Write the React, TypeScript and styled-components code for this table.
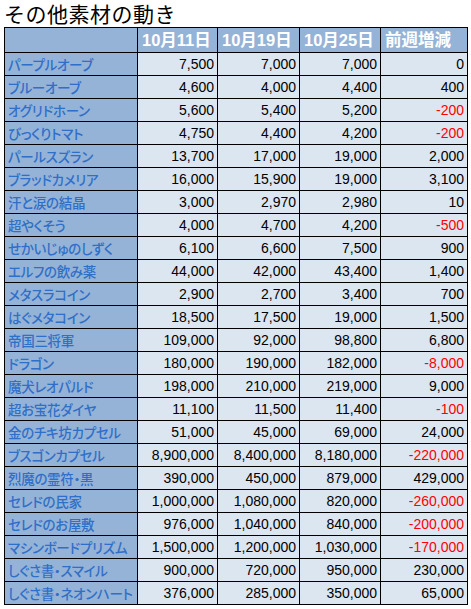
import styled, { createGlobalStyle } from "styled-components";

const GlobalStyle = createGlobalStyle`
  body {
    margin: 0;
    background: #ffffff;
    font-family: "Liberation Sans", "Noto Sans CJK JP", sans-serif;
  }
`;

type Row = {
  name: string;
  values: [string, string, string];
  diff: string;
};

const rows: Row[] = [
  { name: "パープルオーブ", values: ["7,500", "7,000", "7,000"], diff: "0" },
  { name: "ブルーオーブ", values: ["4,600", "4,000", "4,400"], diff: "400" },
  { name: "オグリドホーン", values: ["5,600", "5,400", "5,200"], diff: "-200" },
  { name: "びっくりトマト", values: ["4,750", "4,400", "4,200"], diff: "-200" },
  { name: "パールスズラン", values: ["13,700", "17,000", "19,000"], diff: "2,000" },
  { name: "ブラッドカメリア", values: ["16,000", "15,900", "19,000"], diff: "3,100" },
  { name: "汗と涙の結晶", values: ["3,000", "2,970", "2,980"], diff: "10" },
  { name: "超やくそう", values: ["4,000", "4,700", "4,200"], diff: "-500" },
  { name: "せかいじゅのしずく", values: ["6,100", "6,600", "7,500"], diff: "900" },
  { name: "エルフの飲み薬", values: ["44,000", "42,000", "43,400"], diff: "1,400" },
  { name: "メタスラコイン", values: ["2,900", "2,700", "3,400"], diff: "700" },
  { name: "はぐメタコイン", values: ["18,500", "17,500", "19,000"], diff: "1,500" },
  { name: "帝国三将軍", values: ["109,000", "92,000", "98,800"], diff: "6,800" },
  { name: "ドラゴン", values: ["180,000", "190,000", "182,000"], diff: "-8,000" },
  { name: "魔犬レオパルド", values: ["198,000", "210,000", "219,000"], diff: "9,000" },
  { name: "超お宝花ダイヤ", values: ["11,100", "11,500", "11,400"], diff: "-100" },
  { name: "金のチキ坊カプセル", values: ["51,000", "45,000", "69,000"], diff: "24,000" },
  { name: "ブスゴンカプセル", values: ["8,900,000", "8,400,000", "8,180,000"], diff: "-220,000" },
  { name: "烈魔の霊符・黒", values: ["390,000", "450,000", "879,000"], diff: "429,000" },
  { name: "セレドの民家", values: ["1,000,000", "1,080,000", "820,000"], diff: "-260,000" },
  { name: "セレドのお屋敷", values: ["976,000", "1,040,000", "840,000"], diff: "-200,000" },
  { name: "マシンボードプリズム", values: ["1,500,000", "1,200,000", "1,030,000"], diff: "-170,000" },
  { name: "しぐさ書・スマイル", values: ["900,000", "720,000", "950,000"], diff: "230,000" },
  { name: "しぐさ書・ネオンハート", values: ["376,000", "285,000", "350,000"], diff: "65,000" },
];

const headers = ["10月11日", "10月19日", "10月25日", "前週増減"];
const colWidths = [133, 80, 82, 81, 87];

const Page = styled.div`
  padding: 0 0 0 4px;
`;

const Title = styled.h1`
  margin: 0;
  height: 27px;
  font: 400 21px/27px "Noto Sans CJK JP", sans-serif;
  color: #000000;
  letter-spacing: 0.5px;
`;

const Sheet = styled.table`
  border-collapse: collapse;
  table-layout: fixed;
  width: 463px;
  border: 1px solid #000000;
`;

const HeadCell = styled.th`
  height: 24px;
  padding: 0 0 0 4px;
  background: #95b3d7;
  border: 1px solid #000000;
  color: #ffffff;
  font: 700 16.5px/24px "Liberation Sans", "Noto Sans CJK JP", sans-serif;
  text-align: left;
  white-space: nowrap;
  overflow: hidden;
`;

const NameCell = styled.td`
  height: 22px;
  padding: 0 0 0 3px;
  background: #95b3d7;
  border: 1px solid #000000;
  color: #306fc8;
  font: 500 13.5px/22px "Noto Sans CJK JP", sans-serif;
  font-feature-settings: "palt";
  letter-spacing: -0.3px;
  white-space: nowrap;
  overflow: hidden;
`;

const NumCell = styled.td<{ $negative?: boolean }>`
  height: 22px;
  padding: 0 3px 0 0;
  background: #dce6f1;
  border: 1px solid #000000;
  color: ${(p) => (p.$negative ? "#ff0000" : "#000000")};
  font: 400 14px/22px "Liberation Sans", sans-serif;
  text-align: right;
  white-space: nowrap;
`;

export default function App() {
  return (
    <Page>
      <GlobalStyle />
      <Title>その他素材の動き</Title>
      <Sheet>
        <colgroup>
          {colWidths.map((w, i) => (
            <col key={i} style={{ width: w }} />
          ))}
        </colgroup>
        <thead>
          <tr>
            <HeadCell />
            {headers.map((h) => (
              <HeadCell key={h}>{h}</HeadCell>
            ))}
          </tr>
        </thead>
        <tbody>
          {rows.map((r) => (
            <tr key={r.name}>
              <NameCell>{r.name}</NameCell>
              {r.values.map((v, i) => (
                <NumCell key={i}>{v}</NumCell>
              ))}
              <NumCell $negative={r.diff.startsWith("-")}>{r.diff}</NumCell>
            </tr>
          ))}
        </tbody>
      </Sheet>
    </Page>
  );
}
